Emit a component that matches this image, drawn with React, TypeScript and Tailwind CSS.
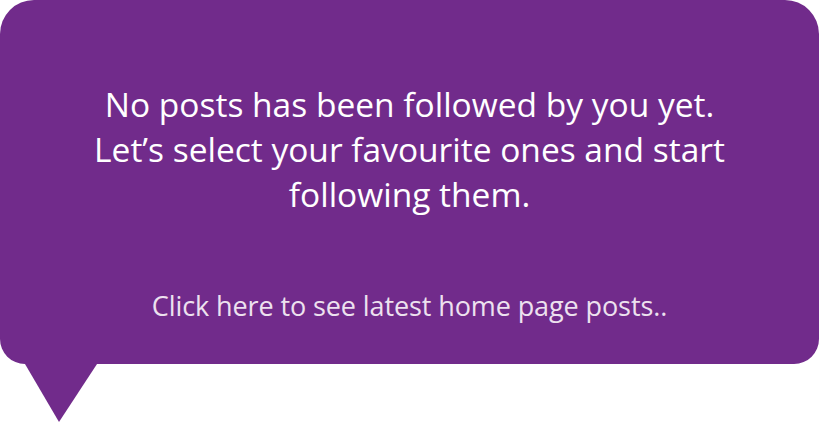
import React from 'react';

export default function App() {
    return (
        <div className="w-[819px] h-[424px] bg-white" style={{ fontFamily: '"Open Sans", "Liberation Sans", sans-serif' }}>
            <div className="h-[364px] bg-[#712b8b] rounded-t-[34px] rounded-b-[25px] flex flex-col items-center pt-[82px]">
                <p className="text-white text-[33.5px] leading-[45px] text-center">
                    No posts has been followed by you yet.<br />
                    Let’s select your favourite ones and start<br />
                    following them.
                </p>
                <a className="mt-[71px] text-[#ede1ef] text-[27px] leading-[36px] tracking-[-0.1px] cursor-pointer">
                    Click here to see latest home page posts..
                </a>
            </div>
            {/* tail of the bubble */}
            <svg className="block ml-[25px]" width="72" height="59" viewBox="0 0 72 59">
                <polygon points="0,0 72,0 34,58" fill="#712b8b" />
            </svg>
        </div>
    );
}
